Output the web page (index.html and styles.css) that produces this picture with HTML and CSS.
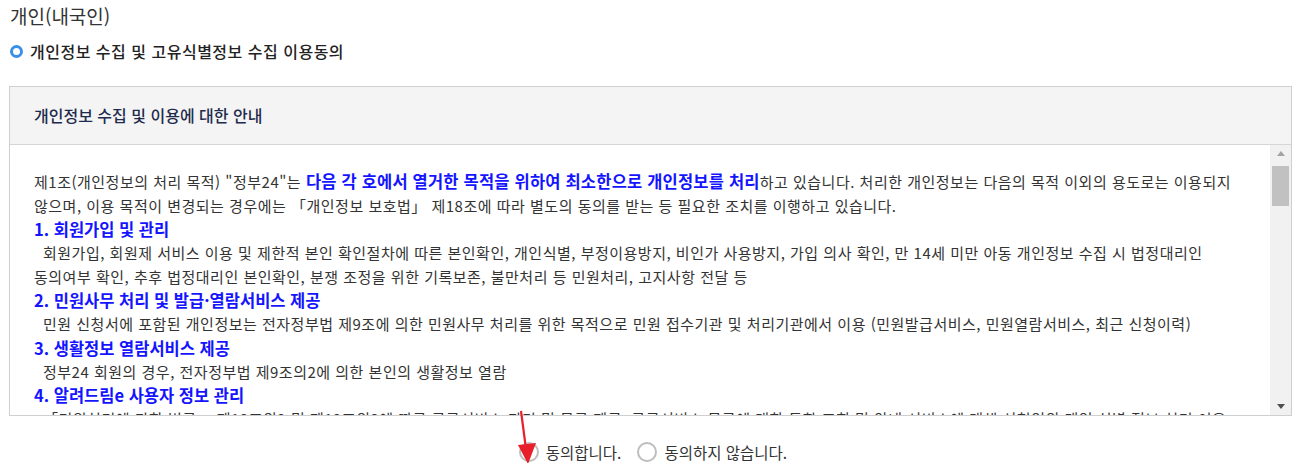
FILE: index.html
```html
<!DOCTYPE html>
<html lang="ko">
  <head>
    <meta charset="UTF-8" />
    <meta name="viewport" content="width=device-width, initial-scale=1.0" />
    <title>개인정보 수집 동의</title>
    <link rel="stylesheet" href="styles.css">
  </head>
  <body>
    <div class="page">
      <h2 class="page-title">개인(내국인)</h2>
      <div class="agree-title">
        <span class="bullet"></span>
        <span>개인정보 수집 및 고유식별정보 수집 이용동의</span>
      </div>

      <div class="terms-box">
        <div class="terms-head">개인정보 수집 및 이용에 대한 안내</div>
        <div class="terms-body">
          <div class="terms-text">
            <p>제1조(개인정보의 처리 목적) "정부24"는 <strong>다음 각 호에서 열거한 목적을 위하여 최소한으로 개인정보를 처리</strong>하고 있습니다. 처리한 개인정보는 다음의 목적 이외의 용도로는 이용되지 않으며, 이용 목적이 변경되는 경우에는 「개인정보 보호법」 제18조에 따라 별도의 동의를 받는 등 필요한 조치를 이행하고 있습니다.</p>
            <h3>1. 회원가입 및 관리</h3>
            <p class="indent">회원가입, 회원제 서비스 이용 및 제한적 본인 확인절차에 따른 본인확인, 개인식별, 부정이용방지, 비인가 사용방지, 가입 의사 확인, 만 14세 미만 아동 개인정보 수집 시 법정대리인 동의여부 확인, 추후 법정대리인 본인확인, 분쟁 조정을 위한 기록보존, 불만처리 등 민원처리, 고지사항 전달 등</p>
            <h3>2. 민원사무 처리 및 발급·열람서비스 제공</h3>
            <p class="indent">민원 신청서에 포함된 개인정보는 전자정부법 제9조에 의한 민원사무 처리를 위한 목적으로 민원 접수기관 및 처리기관에서 이용 (민원발급서비스, 민원열람서비스, 최근 신청이력)</p>
            <h3>3. 생활정보 열람서비스 제공</h3>
            <p class="indent">정부24 회원의 경우, 전자정부법 제9조의2에 의한 본인의 생활정보 열람</p>
            <h3>4. 알려드림e 사용자 정보 관리</h3>
            <p class="indent">「민원처리에 관한 법률」 제12조의2 및 제12조의3에 따른 공공서비스 관리 및 목록 제공, 공공서비스 목록에 대한 통합 조회 및 안내 서비스에 대해 신청인의 개인 식별 정보 처리 이용 또는 신청자 사용범위 확인</p>
          </div>
          <div class="scrollbar">
            <span class="arrow-up"></span>
            <span class="thumb"></span>
            <span class="track"></span>
            <span class="arrow-down"></span>
          </div>
        </div>
      </div>

      <div class="choice-row">
        <label class="choice"><span class="radio"></span>동의합니다.</label>
        <label class="choice"><span class="radio"></span>동의하지 않습니다.</label>
      </div>

      <!-- 안내용 화살표 -->
      <svg class="pointer" width="30" height="60" viewBox="0 0 30 60">
        <line x1="6" y1="2" x2="11" y2="40" stroke="#e8202a" stroke-width="2.2" />
        <polygon points="3,36 21,34 13,55" fill="#e8202a" />
      </svg>
    </div>
  </body>
</html>
```

FILE: styles.css
```css
body {
  margin: 0;
  font-family: "Noto Sans CJK KR", "Noto Sans", sans-serif;
  color: #333;
  background: #fff;
}
.page {
  position: relative;
  padding: 2px 8px 0 9px;
}
.page-title {
  margin: 0 0 0 1px;
  font-size: 19px;
  font-weight: 400;
  line-height: 28px;
  color: #333;
}
.agree-title {
  display: flex;
  align-items: center;
  gap: 7px;
  margin-top: 10px;
  margin-left: 1px;
  font-size: 16px;
  letter-spacing: 0.5px;
  font-weight: 500;
  color: #222;
  line-height: 22px;
}
.bullet {
  width: 7px;
  height: 7px;
  border: 3px solid #3a90e6;
  border-radius: 50%;
}
.terms-box {
  margin-top: 24px;
  border: 1px solid #cfcfcf;
  width: 1281px;
}
.terms-head {
  height: 57px;
  line-height: 57px;
  padding-left: 24px;
  background: #f4f4f4;
  border-bottom: 1px solid #d6d6d6;
  font-size: 16px;
  font-weight: 500;
  color: #1e2b4d;
}
.terms-body {
  display: flex;
  height: 270px;
}
.terms-text {
  flex: 1;
  overflow: hidden;
  padding: 25px 20px 0 24px;
  font-size: 15px;
  letter-spacing: 0.5px;
  line-height: 23.5px;
  word-break: keep-all;
}
.terms-text p {
  margin: 0;
}
.terms-text p.indent {
  text-indent: 9px;
}
.terms-text strong,
.terms-text h3 {
  color: #1414ff;
  font-weight: 700;
}
.terms-text strong {
  font-size: 16.5px;
  letter-spacing: 0.2px;
}
.terms-text h3 {
  margin: 0;
  font-size: 16.5px;
  letter-spacing: 0;
  line-height: 24px;
}
.scrollbar {
  width: 21px;
  display: flex;
  flex-direction: column;
  align-items: center;
  background: #f1f1f1;
}
.arrow-up,
.arrow-down {
  height: 17px;
  display: flex;
  align-items: center;
}
.arrow-up::before {
  content: "";
  border: 4px solid transparent;
  border-top: 0;
  border-bottom: 5px solid #a3a3a3;
}
.arrow-down::before {
  content: "";
  border: 4px solid transparent;
  border-bottom: 0;
  border-top: 5px solid #505050;
}
.thumb {
  width: 17px;
  height: 40px;
  margin-top: 4px;
  background: #c1c1c1;
}
.track {
  flex: 1;
}
.choice-row {
  display: flex;
  justify-content: center;
  gap: 16px;
  margin-top: 25px;
  margin-left: 6px;
  font-size: 15.5px;
  color: #333;
}
.choice {
  display: flex;
  align-items: center;
  gap: 7px;
}
.radio {
  flex: none;
  width: 16px;
  height: 16px;
  border: 2px solid #bdbdbd;
  border-radius: 50%;
}
.pointer {
  position: absolute;
  left: 515px;
  top: 409px;
}
```
